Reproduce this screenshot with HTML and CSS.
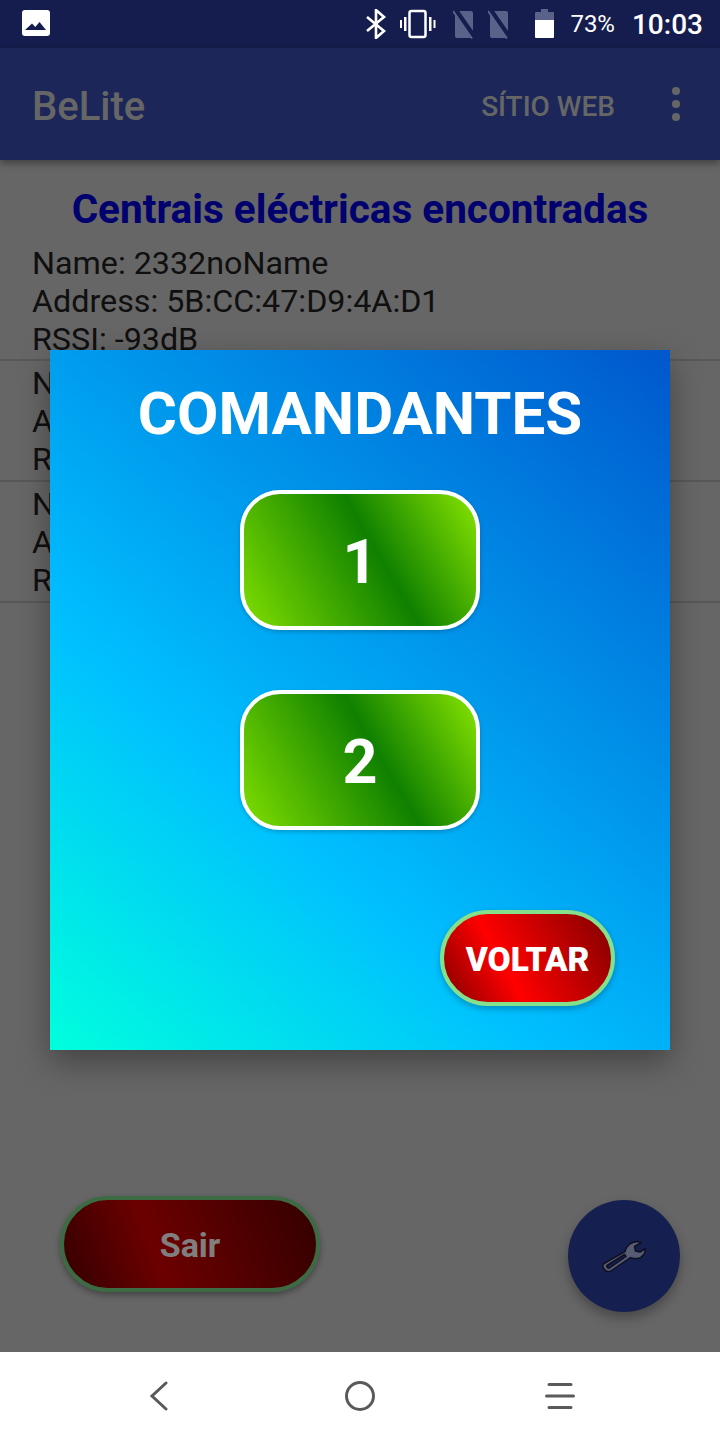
FILE: index.html
```html
<!DOCTYPE html>
<html lang="pt">
<head>
<meta charset="utf-8">
<title>BeLite</title>
<link rel="stylesheet" href="styles.css">
</head>
<body>
<div class="phone">
  <header class="status">
    <svg class="ic-image" width="28" height="28" viewBox="0 0 28 28"><path fill="#fff" fill-rule="evenodd" d="M3 0h22a3 3 0 0 1 3 3v20a3 3 0 0 1-3 3H3a3 3 0 0 1-3-3V3a3 3 0 0 1 3-3zM3 20h21l-6.500-8-4.200 5-3.300-3.500z"/></svg>
    <div class="status-right">
      <svg width="20" height="30" viewBox="0 0 20 30" class="ic-bt"><path fill="none" stroke="#fff" stroke-width="2.600" d="M1 8l17 14-8 7V1l8 7L1 22"/></svg>
      <svg width="36" height="30" viewBox="0 0 36 30" class="ic-vib"><rect x="9.500" y="2" width="16" height="26" rx="2" fill="none" stroke="#fff" stroke-width="2.500"/><path fill="#fff" d="M4 8h2.500v14H4zM0 11h2v8H0zM29 8h2.500v14H29zM33.500 11h2v8h-2z"/></svg>
      <svg width="24" height="30" viewBox="0 0 24 30" class="ic-sim"><path fill="#5a6289" d="M5 2h13a2 2 0 0 1 2 2v23a2 2 0 0 1-2 2H4a2 2 0 0 1-2-2V6z"/><path stroke="#151d4e" stroke-width="5" d="M1 -1l21 30"/><path stroke="#5a6289" stroke-width="2" d="M0 2l19 27.500"/></svg>
      <svg width="24" height="30" viewBox="0 0 24 30" class="ic-sim2"><path fill="#5a6289" d="M5 2h13a2 2 0 0 1 2 2v23a2 2 0 0 1-2 2H4a2 2 0 0 1-2-2V6z"/><path stroke="#151d4e" stroke-width="5" d="M1 -1l21 30"/><path stroke="#5a6289" stroke-width="2" d="M0 2l19 27.500"/></svg>
      <svg width="20" height="30" viewBox="0 0 20 30" class="ic-bat"><path fill="#5a6289" d="M6 0h7v3h5a1 1 0 0 1 1 1v7H0V4a1 1 0 0 1 1-1h5z"/><path fill="#fff" d="M0 11h19v17a1 1 0 0 1-1 1H1a1 1 0 0 1-1-1z"/></svg>
      <span class="pct">73%</span>
      <span class="time">10:03</span>
    </div>
  </header>

  <div class="screen">
    <div class="appbar">
      <div class="app-title">BeLite</div>
      <div class="app-action">SÍTIO WEB</div>
      <div class="dots"><i></i><i></i><i></i></div>
    </div>

    <main class="content">
      <h1 class="heading">Centrais eléctricas encontradas</h1>
      <ul class="list">
        <li class="device">Name: 2332noName<br>Address: 5B:CC:47:D9:4A:D1<br>RSSI: -93dB</li>
        <li class="device">Name: 2332noName<br>Address: 5B:CC:47:D9:4A:D2<br>RSSI: -90dB</li>
        <li class="device">Name: 2332noName<br>Address: 5B:CC:47:D9:4A:D3<br>RSSI: -88dB</li>
      </ul>
      <div class="footer">
        <button class="sair">Sair</button>
        <button class="fab" aria-label="Ferramentas">
          <svg width="46" height="36" viewBox="0 0 46 36"><path fill="#aeb6e6" stroke="#1c2040" stroke-width="1.500" stroke-linejoin="round" d="M3 25.500L24 13.500C25 8 30 3.500 37 3.500L40.500 4.500L33.500 8.500L34.500 13L39 14L44.500 10.500C44.500 15 41.500 20 36.500 20.500C33.500 21 31 20 29.500 19.500L10.500 32.500C7.500 34.500 4.500 33.500 3 31C1.500 29 1.500 27 3 25.500ZM6 27.500C5 28.500 7 31 8.500 30L25 18.500L23.500 16.500Z"/></svg>
        </button>
      </div>
    </main>

    <div class="scrim">
      <section class="dialog">
        <h2 class="dialog-title">COMANDANTES</h2>
        <button class="cmd cmd-a">1</button>
        <button class="cmd cmd-b">2</button>
        <div class="dialog-actions"><button class="voltar">VOLTAR</button></div>
      </section>
    </div>
  </div>

  <nav class="navbar">
    <svg class="nav-back" width="20" height="30" viewBox="0 0 20 30"><path fill="none" stroke="#5a5a5a" stroke-width="3" stroke-linecap="round" d="M17 2L3 15l14 13"/></svg>
    <svg class="nav-home" width="30" height="30" viewBox="0 0 30 30"><circle cx="15" cy="15" r="13.500" fill="none" stroke="#5a5a5a" stroke-width="3"/></svg>
    <svg width="30" height="28" viewBox="0 0 30 28"><path fill="none" stroke="#5a5a5a" stroke-width="3" stroke-linecap="round" d="M4 2.500h22M1.500 14h27M4 25.500h22"/></svg>
  </nav>
</div>
</body>
</html>
```
FILE: styles.css
```css
* { box-sizing: border-box; }
html, body { margin: 0; padding: 0; }
body { font-family: Roboto, "Liberation Sans", sans-serif; background: #fff; }
button { font-family: inherit; padding: 0; cursor: pointer; }

.phone { width: 720px; height: 1440px; display: flex; flex-direction: column; overflow: hidden; }

.status { height: 48px; flex: none; background: #151d4e; display: flex; align-items: center; justify-content: space-between; padding: 0 17px 0 22px; color: #fff; }
.ic-image { display: block; }
.status-right { display: flex; align-items: center; }
.ic-bt { margin-right: 14px; }
.ic-vib { margin-right: 17px; }
.ic-sim { margin-right: 11px; }
.ic-sim2 { margin-right: 23px; }
.ic-bat { margin-right: 15px; }
.pct { font-size: 24px; margin-right: 17px; }
.time { font-size: 28px; font-weight: 500; }

.screen { position: relative; flex: 1; display: flex; flex-direction: column; min-height: 0; }

.appbar { height: 112px; flex: none; background: #384cb2; display: flex; align-items: center; padding: 4px 40px 0 32px; color: #ccc; box-shadow: 0 3px 8px rgba(0,0,0,.4); position: relative; z-index: 1; }
.app-title { font-size: 40px; font-weight: 500; flex: 1; }
.app-action { font-size: 28px; font-weight: 500; margin-right: 57px; }
.dots { display: flex; flex-direction: column; gap: 5px; margin-top: -4px; }
.dots i { display: block; width: 8px; height: 8px; border-radius: 50%; background: #ccc; }

.content { flex: 1; background: #ccc; display: flex; flex-direction: column; min-height: 0; }
.heading { margin: 26px 0 0; font-size: 40.500px; line-height: 47px; font-weight: 700; color: #0000dc; text-align: center; }
.list { list-style: none; margin: 11px 0 0; padding: 0; flex: 1; }
.device { font-size: 32.250px; line-height: 38px; color: #202020; padding: 3px 32px 2px; border-bottom: 2px solid #b0b0b0; height: 121px; }
.device:first-child { height: 117px; padding-top: 0; }

.footer { height: 156px; flex: none; display: flex; justify-content: space-between; align-items: flex-start; padding: 0 40px 0 60px; }
.sair { width: 260px; height: 96px; border-radius: 48px; border: 4px solid #78d484; color: #fff; font-size: 34px; font-weight: 700; padding-top: 2px; background: linear-gradient(69.700deg, #680000 0%, #d80000 36.500%, #680000 100%); box-shadow: 0 3px 6px rgba(0,0,0,.35); }
.fab { width: 112px; height: 112px; border-radius: 50%; border: 0; background: #2c40a0; display: flex; align-items: center; justify-content: center; margin-top: 4px; box-shadow: 0 6px 12px rgba(0,0,0,.3); }

.scrim { position: absolute; inset: 0; z-index: 2; background: rgba(0,0,0,.5); display: flex; align-items: center; justify-content: center; }
.dialog { width: 620px; height: 700px; background: linear-gradient(41.5deg, #00ffdd 0%, #00bfff 35%, #0057cc 100%); box-shadow: 0 12px 30px rgba(0,0,0,.35); display: flex; flex-direction: column; align-items: center; }
.dialog-title { margin: 28px 0 0; font-size: 60px; line-height: 72px; font-weight: 700; color: #fff; }
.cmd { width: 240px; height: 140px; border-radius: 40px; border: 4px solid #fff; color: #fff; font-size: 61px; font-weight: 700; padding-top: 4px; box-shadow: 0 2px 4px rgba(0,0,0,.2); }
.cmd-a { margin-top: 40px; background: linear-gradient(59.7deg, #80de00 0%, #0f8000 57%, #80de00 97%); }
.cmd-b { margin-top: 60px; background: linear-gradient(59.7deg, #80de00 0%, #0f8000 57%, #80de00 97%); }
.dialog-actions { align-self: stretch; display: flex; justify-content: flex-end; padding: 80px 55px 0 0; }
.voltar { width: 175px; height: 96px; border-radius: 48px; border: 4px solid #84e08a; color: #fff; font-size: 33.500px; font-weight: 900; padding-top: 2px; background: linear-gradient(61deg, #800000 0%, #ff0000 37%, #800000 100%); box-shadow: 0 3px 6px rgba(0,0,0,.25); }

.navbar { height: 88px; flex: none; background: #fff; display: flex; align-items: center; justify-content: center; padding-left: 4px; gap: 170px; }
.nav-back { margin-right: 6px; }
```
